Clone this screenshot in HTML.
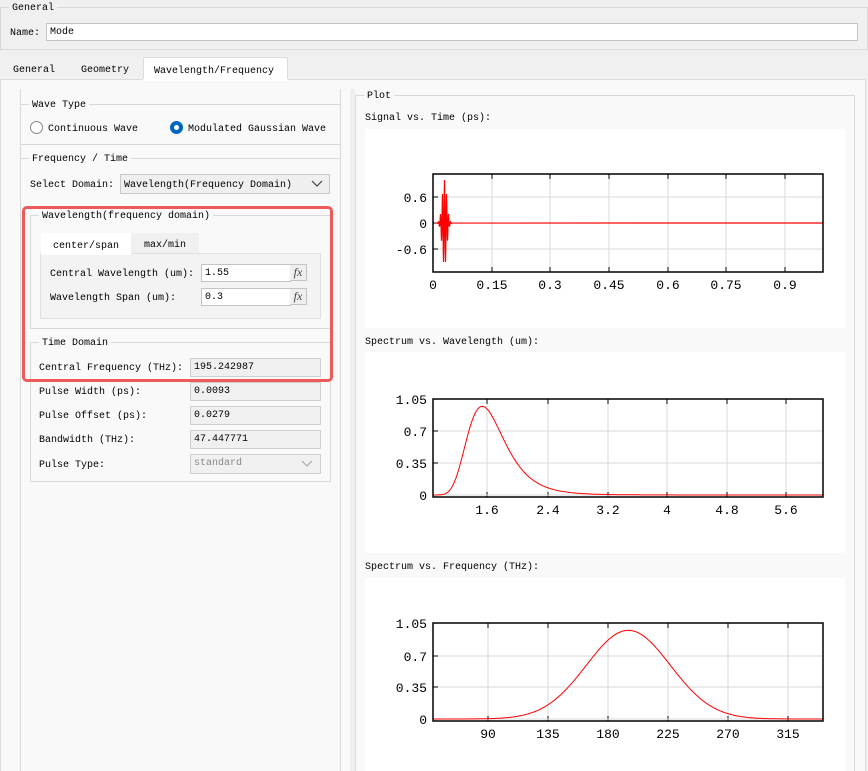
<!DOCTYPE html>
<html><head><meta charset="utf-8"><style>
*{box-sizing:border-box;margin:0;padding:0}
body{width:868px;height:771px;overflow:hidden;background:#f0f0f0;font-family:"Liberation Mono","Noto Sans CJK SC",monospace;font-size:10px;color:#000;position:relative}
.a{position:absolute}
.grp{position:absolute;border:1px solid #d9d9d9}
.lg{position:absolute;top:-5px;left:8px;padding:0 3px;line-height:12px;background:inherit}
.in{position:absolute;background:#fff;border:1px solid #c4c4c4;padding-left:3px;padding-top:1px;line-height:15px}
.ro{position:absolute;background:#f0f0f0;border:1px solid #cfcfcf;padding-left:3px;padding-top:1px;line-height:16px}
.t{position:absolute;line-height:12px;white-space:nowrap;padding-top:2px}
.fx{position:absolute;width:17px;height:17px;background:#efefef;border:1px solid #c4c4c4;border-left:none;font-family:"Liberation Serif",serif;font-style:italic;font-size:12px;text-align:center;line-height:15px;color:#444}
</style></head><body>
<!-- General -->
<div class="grp" style="left:0;top:7px;width:868px;height:43px;background:#f0f0f0"><span class="lg" style="left:8px">General</span></div>
<div class="t" style="left:10px;top:26px">Name:</div>
<div class="in" style="left:46px;top:23px;width:812px;height:18px">Mode</div>
<!-- tabs -->
<div class="t" style="left:13px;top:63px">General</div>
<div class="t" style="left:81px;top:63px">Geometry</div>
<div class="a" style="left:143px;top:57px;width:145px;height:23px;background:#fff;border:1px solid #dcdcdc;border-bottom:none"></div>
<div class="t" style="left:154px;top:64px">Wavelength/Frequency</div>
<div class="a" style="left:0;top:79px;width:866px;height:692px;background:#f9f9f9;border:1px solid #dcdcdc;border-bottom:none"></div>
<div class="a" style="left:143px;top:79px;width:145px;height:2px;background:#fff"></div>
<div class="a" style="left:20px;top:89px;width:1px;height:682px;background:#d9d9d9"></div>
<div class="a" style="left:340px;top:89px;width:1px;height:682px;background:#d9d9d9"></div>
<div class="a" style="left:350px;top:89px;width:5px;height:682px;background:#efefef"></div>
<!-- Wave type -->
<div class="grp" style="left:20px;top:104px;width:321px;height:41px;background:#f9f9f9"><span class="lg">Wave Type</span></div>
<div class="a" style="left:30px;top:121px;width:13px;height:13px;border:1px solid #888;border-radius:50%;background:#fff"></div>
<div class="t" style="left:48px;top:122px">Continuous Wave</div>
<div class="a" style="left:170px;top:121px;width:13px;height:13px;border-radius:50%;background:#0067c0"><div class="a" style="left:4px;top:4px;width:5px;height:5px;border-radius:50%;background:#fff"></div></div>
<div class="t" style="left:188px;top:122px">Modulated Gaussian Wave</div>
<!-- Freq/time -->
<div class="grp" style="left:20px;top:158px;width:321px;height:613px;border-bottom:none;background:#f9f9f9"><span class="lg">Frequency / Time</span></div>
<div class="t" style="left:30px;top:178px">Select Domain:</div>
<div class="a" style="left:120px;top:174px;width:210px;height:20px;background:#efefef;border:1px solid #c8c8c8"></div>
<div class="t" style="left:124px;top:178px">Wavelength(Frequency Domain)</div>
<svg class="a" style="left:311px;top:180px" width="12" height="8"><path d="M1 1 L6 6 L11 1" fill="none" stroke="#444" stroke-width="1.2"/></svg>
<!-- Wavelength group -->
<div class="grp" style="left:30px;top:215px;width:301px;height:114px;background:#f9f9f9"><span class="lg">Wavelength(frequency domain)</span></div>
<div class="a" style="left:131px;top:233px;width:68px;height:21px;background:#f0f0f0"></div>
<div class="t" style="left:144px;top:238px">max/min</div>
<div class="a" style="left:40px;top:253px;width:281px;height:66px;background:#f3f3f3;border:1px solid #e0e0e0"></div>
<div class="a" style="left:41px;top:233px;width:90px;height:22px;background:#fff"></div>
<div class="t" style="left:53px;top:239px">center/span</div>
<div class="t" style="left:50px;top:267px">Central Wavelength (um):</div>
<div class="in" style="left:201px;top:264px;width:90px;height:18px">1.55</div><div class="fx" style="left:290px;top:264px">fx</div>
<div class="t" style="left:50px;top:291px">Wavelength Span (um):</div>
<div class="in" style="left:201px;top:288px;width:90px;height:18px">0.3</div><div class="fx" style="left:290px;top:288px">fx</div>
<!-- Time domain -->
<div class="grp" style="left:30px;top:342px;width:301px;height:140px;background:#f9f9f9"><span class="lg">Time Domain</span></div>
<div class="t" style="left:39px;top:361px">Central Frequency (THz):</div>
<div class="ro" style="left:190px;top:358px;width:131px;height:19px">195.242987</div>
<div class="t" style="left:39px;top:385px">Pulse Width (ps):</div>
<div class="ro" style="left:190px;top:382px;width:131px;height:19px">0.0093</div>
<div class="t" style="left:39px;top:409px">Pulse Offset (ps):</div>
<div class="ro" style="left:190px;top:406px;width:131px;height:19px">0.0279</div>
<div class="t" style="left:39px;top:433px">Bandwidth (THz):</div>
<div class="ro" style="left:190px;top:430px;width:131px;height:19px">47.447771</div>
<div class="t" style="left:39px;top:458px">Pulse Type:</div>
<div class="ro" style="left:190px;top:454px;width:131px;height:20px;color:#888">standard</div>
<svg class="a" style="left:301px;top:460px" width="12" height="8"><path d="M1 1 L6 6 L11 1" fill="none" stroke="#aaa" stroke-width="1.2"/></svg>
<div class="a" style="left:22px;top:206px;width:311px;height:176px;border:3px solid #ee5a5a;border-radius:5px"></div>
<!-- Plot group -->
<div class="grp" style="left:355px;top:95px;width:500px;height:676px;border-bottom:none;background:#f9f9f9"><span class="lg">Plot</span></div>
<div class="t" style="left:365px;top:111px">Signal vs. Time (ps):</div>
<div class="t" style="left:365px;top:335px">Spectrum vs. Wavelength (um):</div>
<div class="t" style="left:365px;top:560px">Spectrum vs. Frequency (THz):</div>
<div class="a" style="left:365px;top:129px;width:480px;height:199px;background:#fff"></div>
<div class="a" style="left:365px;top:352px;width:480px;height:201px;background:#fff"></div>
<div class="a" style="left:365px;top:578px;width:480px;height:193px;background:#fff"></div>
<svg class="a" style="left:0;top:0" width="868" height="771" id="s" font-family="Liberation Mono, monospace" font-size="13"></svg>
<script>
var s='';
function ax(y0,y1,xt,yt){
 xt.forEach(function(t){s+='<line x1="'+t[0]+'" y1="'+y0+'" x2="'+t[0]+'" y2="'+y1+'" stroke="#d8d8d8"/><line x1="'+t[0]+'" y1="'+y0+'" x2="'+t[0]+'" y2="'+(y0+5)+'" stroke="#000"/><line x1="'+t[0]+'" y1="'+y1+'" x2="'+t[0]+'" y2="'+(y1-5)+'" stroke="#000"/><text x="'+t[0]+'" y="'+(y1+17)+'" text-anchor="middle">'+t[1]+'</text>';});
 yt.forEach(function(t){s+='<line x1="433" y1="'+t[0]+'" x2="823" y2="'+t[0]+'" stroke="#d8d8d8"/><line x1="433" y1="'+t[0]+'" x2="438" y2="'+t[0]+'" stroke="#000"/><text x="427" y="'+(t[0]+5)+'" text-anchor="end">'+t[1]+'</text>';});
}
ax(174,272,[[433,'0'],[492,'0.15'],[550,'0.3'],[609,'0.45'],[668,'0.6'],[726,'0.75'],[785,'0.9']],[[197,'0.6'],[223,'0'],[249,'-0.6']]);
var d='M438 223';for(var x=437;x<=452;x+=0.25){var t=(x-444.5)/3.2;var a=Math.exp(-t*t)*43*Math.cos((x-444.5)*3.1);d+=' L'+x+' '+(223-a);}
d+=' L823 223';s+='<path d="'+d+'" fill="none" stroke="#f00" stroke-width="1.2"/>';
s+='<rect x="433" y="174" width="390" height="98" fill="none" stroke="#000" stroke-width="1.5"/>';
ax(399,497,[[487,'1.6'],[548,'2.4'],[608,'3.2'],[667,'4'],[727,'4.8'],[786,'5.6']],[[399,'1.05'],[431,'0.7'],[463,'0.35'],[495,'0']]);
d='';for(var x=433;x<=823;x++){var l=1.6+(x-487)/75.4;var f=300/l;var u=(f-195.24)/31.5;var y=495-91.4*0.97*Math.exp(-u*u/2);d+=(d?' L':'M')+x+' '+y.toFixed(1);}
s+='<path d="'+d+'" fill="none" stroke="#f00" stroke-width="1"/><rect x="433" y="399" width="390" height="98" fill="none" stroke="#000" stroke-width="1.5"/>';
ax(623,721,[[488,'90'],[548,'135'],[608,'180'],[668,'225'],[728,'270'],[788,'315']],[[623,'1.05'],[656,'0.7'],[687,'0.35'],[719,'0']]);
d='';for(var x=433;x<=823;x++){var f=90+(x-488)/1.3333;var u=(f-195.24)/31.5;var y=719-91.4*0.97*Math.exp(-u*u/2);d+=(d?' L':'M')+x+' '+y.toFixed(1);}
s+='<path d="'+d+'" fill="none" stroke="#f00" stroke-width="1"/><rect x="433" y="623" width="390" height="98" fill="none" stroke="#000" stroke-width="1.5"/>';
document.getElementById('s').innerHTML=s;
</script>
</body></html>
